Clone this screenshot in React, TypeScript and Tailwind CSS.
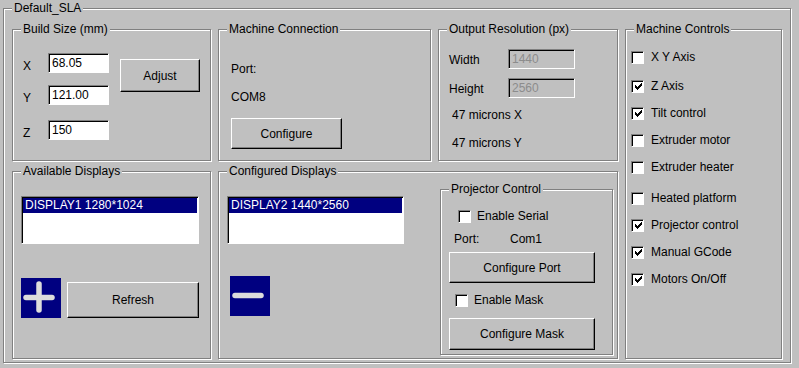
import type { ReactNode } from 'react'

const controls = [
  { label: 'X Y Axis', checked: false, mt: 'mt-[14px]' },
  { label: 'Z Axis', checked: true, mt: 'mt-[15px]' },
  { label: 'Tilt control', checked: true, mt: 'mt-[13px]' },
  { label: 'Extruder motor', checked: false, mt: 'mt-[13px]' },
  { label: 'Extruder heater', checked: false, mt: 'mt-[13px]' },
  { label: 'Heated platform', checked: false, mt: 'mt-[17px]' },
  { label: 'Projector control', checked: true, mt: 'mt-[13px]' },
  { label: 'Manual GCode', checked: true, mt: 'mt-[13px]' },
  { label: 'Motors On/Off', checked: true, mt: 'mt-[13px]' },
]

function Group({ title, className, children }: { title: string; className: string; children?: ReactNode }) {
  return (
    <div className={`border border-[#808080] shadow-[inset_1px_1px_0_#fff,1px_1px_0_#fff] ${className}`}>
      <div className="-mt-[8px] ml-[8px] h-[14px] w-fit bg-[#c0c0c0] px-[2px] leading-[14px]">{title}</div>
      {children}
    </div>
  )
}

function TextBox({ value, disabled, className }: { value: string; disabled?: boolean; className: string }) {
  return (
    <div
      className={`h-[20px] border border-t-[#808080] border-l-[#808080] border-b-white border-r-white pl-[3px] leading-[18px] shadow-[inset_1px_1px_0_#000] ${
        disabled ? 'bg-[#c0c0c0] text-[#8c8c8c]' : 'bg-white'
      } ${className}`}
    >
      {value}
    </div>
  )
}

function Button({ label, className }: { label: string; className: string }) {
  return (
    <button
      type="button"
      className={`flex items-center justify-center border border-t-white border-l-white border-b-black border-r-black bg-[#c0c0c0] shadow-[inset_-1px_-1px_0_#808080] ${className}`}
    >
      {label}
    </button>
  )
}

// classic 7x7 win32 check mark, one 1x3 column per x
const tick = [2, 3, 4, 3, 2, 1, 0]

function Check({ checked }: { checked: boolean }) {
  return (
    <span className="flex h-[13px] w-[13px] shrink-0 items-center justify-center border border-t-[#808080] border-l-[#808080] border-b-white border-r-white bg-white shadow-[inset_1px_1px_0_#000]">
      {checked && (
        <svg width="7" height="7" viewBox="0 0 7 7" shapeRendering="crispEdges" className="ml-[1px] mt-[1px]">
          {tick.map((y, x) => (
            <rect key={x} x={x} y={y} width="1" height="3" fill="#000" />
          ))}
        </svg>
      )}
    </span>
  )
}

function CheckRow({ label, checked, className }: { label: string; checked: boolean; className: string }) {
  return (
    <div className={`flex h-[14px] items-center leading-[14px] ${className}`}>
      <Check checked={checked} />
      <span className="ml-[7px]">{label}</span>
    </div>
  )
}

function ListBox({ item, className }: { item: string; className: string }) {
  return (
    <div className={`h-[48px] border border-t-[#808080] border-l-[#808080] border-b-white border-r-white bg-white p-[1px] shadow-[inset_1px_1px_0_#000] ${className}`}>
      <div className="h-[15px] bg-[#000080] pl-[2px] leading-[15px] text-white">{item}</div>
    </div>
  )
}

function PlusMinus({ plus }: { plus?: boolean }) {
  return (
    <svg width="40" height="40" viewBox="0 0 40 40" className="shrink-0">
      <rect width="40" height="40" fill="#000080" />
      <line x1="5" y1="19.5" x2="31" y2="19.5" stroke="#dcdcdc" strokeWidth="5.5" strokeLinecap="round" />
      {plus && <line x1="18" y1="6" x2="18" y2="32" stroke="#dcdcdc" strokeWidth="5.5" strokeLinecap="round" />}
    </svg>
  )
}

export default function App() {
  return (
    <div className="h-[368px] w-[799px] overflow-hidden bg-[#c0c0c0] pl-[3px] pt-[8px] font-['Liberation_Sans',Arial,sans-serif] text-[12px] text-black">
      <Group title="Default_SLA" className="h-[355px] w-[788px]">
        <div className="flex gap-[7px] pl-[8px] pt-[14px]">
          <div className="flex flex-col gap-[10px]">
            <div className="flex gap-[7px]">
              <Group title="Build Size (mm)" className="h-[132px] w-[199px]">
                <div className="flex pl-[10px] pt-[17px]">
                  <div className="flex flex-col">
                    {[
                      { l: 'X', v: '68.05', mt: '' },
                      { l: 'Y', v: '121.00', mt: 'mt-[12px]' },
                      { l: 'Z', v: '150', mt: 'mt-[15px]' },
                    ].map((r) => (
                      <div key={r.l} className={`flex items-start ${r.mt}`}>
                        <span className="w-[25px] pt-[6px] leading-[14px]">{r.l}</span>
                        <TextBox value={r.v} className="w-[61px]" />
                      </div>
                    ))}
                  </div>
                  <Button label="Adjust" className="ml-[11px] mt-[6px] h-[33px] w-[80px]" />
                </div>
              </Group>

              <Group title="Machine Connection" className="h-[132px] w-[213px]">
                <div className="flex flex-col pl-[12px] leading-[14px]">
                  <span className="mt-[26px]">Port:</span>
                  <span className="mt-[14px]">COM8</span>
                  <Button label="Configure" className="mt-[14px] h-[31px] w-[111px]" />
                </div>
              </Group>

              <Group title="Output Resolution (px)" className="h-[132px] w-[180px]">
                <div className="flex flex-col pl-[10px] leading-[14px]">
                  <div className="mt-[13px] flex items-start">
                    <span className="w-[59px] pt-[4px]">Width</span>
                    <TextBox value="1440" disabled className="w-[67px]" />
                  </div>
                  <div className="mt-[9px] flex items-start">
                    <span className="w-[59px] pt-[4px]">Height</span>
                    <TextBox value="2560" disabled className="w-[67px]" />
                  </div>
                  <span className="ml-[3px] mt-[10px]">47 microns X</span>
                  <span className="ml-[3px] mt-[14px]">47 microns Y</span>
                </div>
              </Group>
            </div>

            <div className="flex gap-[7px]">
              <Group title="Available Displays" className="h-[188px] w-[199px]">
                <div className="flex flex-col pl-[8px] pt-[18px]">
                  <ListBox item="DISPLAY1 1280*1024" className="w-[178px]" />
                  <div className="mt-[34px] flex items-end gap-[6px]">
                    <PlusMinus plus />
                    <Button label="Refresh" className="h-[36px] w-[132px]" />
                  </div>
                </div>
              </Group>

              <Group title="Configured Displays" className="h-[188px] w-[400px]">
                <div className="flex">
                  <div className="flex flex-col pl-[8px] pt-[18px]">
                    <ListBox item="DISPLAY2 1440*2560" className="w-[177px]" />
                    <div className="ml-[3px] mt-[32px]">
                      <PlusMinus />
                    </div>
                  </div>

                  <Group title="Projector Control" className="ml-auto mr-[4px] mt-[11px] h-[166px] w-[173px]">
                    <div className="flex flex-col leading-[14px]">
                      <CheckRow label="Enable Serial" checked={false} className="ml-[17px] mt-[13px] [&>span:last-child]:ml-[6px]" />
                      <div className="ml-[13px] mt-[9px] flex">
                        <span className="w-[56px]">Port:</span>
                        <span>Com1</span>
                      </div>
                      <Button label="Configure Port" className="ml-[8px] mt-[6px] h-[31px] w-[146px]" />
                      <CheckRow label="Enable Mask" checked={false} className="ml-[14px] mt-[10px] [&>span:last-child]:ml-[6px]" />
                      <Button label="Configure Mask" className="ml-[8px] mt-[11px] h-[32px] w-[146px]" />
                    </div>
                  </Group>
                </div>
              </Group>
            </div>
          </div>

          <Group title="Machine Controls" className="h-[330px] w-[157px]">
            <div className="flex flex-col pl-[5px]">
              {controls.map((c) => (
                <CheckRow key={c.label} label={c.label} checked={c.checked} className={c.mt} />
              ))}
            </div>
          </Group>
        </div>
      </Group>
    </div>
  )
}
